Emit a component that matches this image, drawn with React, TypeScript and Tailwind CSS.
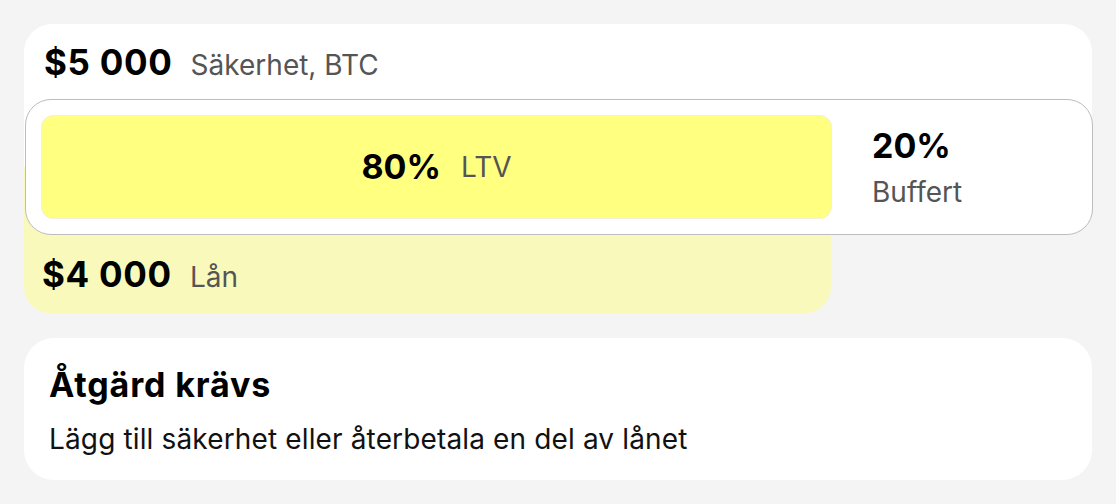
import React from 'react';

const font = { fontFamily: 'Inter, "Noto Sans", sans-serif' };

export default function App() {
  return (
    <div className="min-h-screen bg-[#f4f4f4] p-6" style={font}>
      <div className="w-[1068px] flex flex-col gap-[25px]">
        {/* Collateral + loan overview */}
        <div className="relative">
          <div className="bg-white rounded-t-[28px] h-[143px] px-5 pt-[21px]">
            <div className="flex items-baseline gap-[18px] leading-none">
              <span className="text-[35px] font-bold text-black tracking-[0.02em]">$5 000</span>
              <span className="text-[28px] text-[#555555]">Säkerhet, BTC</span>
            </div>
          </div>
          <div className="w-[807px] h-[146px] bg-[#f9f9bb] rounded-b-[26px] px-[18px] flex items-end pb-[21px]">
            <div className="flex items-baseline gap-[18px] leading-none">
              <span className="text-[35px] font-bold text-black tracking-[0.02em]">$4 000</span>
              <span className="text-[28px] text-[#555555]">Lån</span>
            </div>
          </div>

          {/* LTV bar, sits over both halves */}
          <div className="absolute left-[1px] top-[75px] w-[1068px] h-[136px] bg-white border border-[#bdbdbd] rounded-[26px] p-[15px] flex items-stretch">
            <div className="w-[791px] bg-[#ffff80] border border-[#f1f1dc] rounded-[12px] flex items-center justify-center gap-[20px] leading-none">
              <span className="text-[34px] font-bold text-black">80%</span>
              <span className="text-[28px] text-[#555555]">LTV</span>
            </div>
            <div className="flex flex-col justify-center pl-[40px] gap-[15px] leading-none">
              <span className="text-[34px] font-bold text-black">20%</span>
              <span className="text-[28px] text-[#555555]">Buffert</span>
            </div>
          </div>
        </div>

        {/* Action required */}
        <div className="bg-white rounded-[30px] h-[142px] px-[25px] pt-[30px] leading-none">
          <h2 className="text-[34px] font-bold text-black tracking-[0.025em]">Åtgärd krävs</h2>
          <p className="text-[28px] text-[#111111] mt-[23px] tracking-[0.005em]">Lägg till säkerhet eller återbetala en del av lånet</p>
        </div>
      </div>
    </div>
  );
}
